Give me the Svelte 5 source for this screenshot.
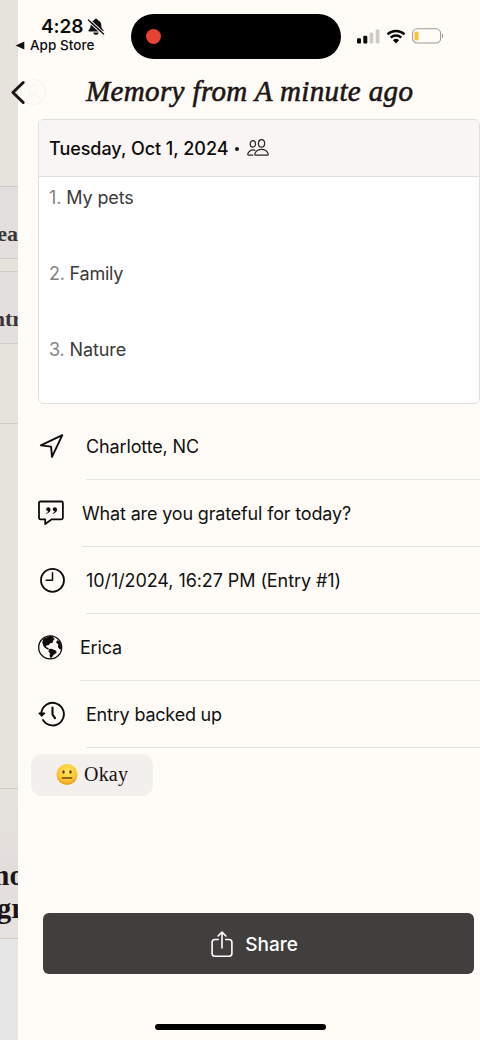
<script>
  const entries = ['My pets', 'Family', 'Nature'];
  const details = [
    { icon: 'location', label: 'Charlotte, NC', indent: 68, track: -0.13 },
    { icon: 'prompt', label: 'What are you grateful for today?', indent: 64, track: -0.16 },
    { icon: 'clock', label: '10/1/2024, 16:27 PM (Entry #1)', indent: 68, track: -0.08 },
    { icon: 'globe', label: 'Erica', indent: 62, track: -0.2 },
    { icon: 'history', label: 'Entry backed up', indent: 68, track: -0.2 }
  ];
</script>

<div class="screen">
  <aside class="peek">
    <div class="p-top"></div>
    <div class="p-box"><b>ea</b></div>
    <div class="p-gap"></div>
    <div class="p-box second"><b>ntr</b></div>
    <div class="p-mid"></div>
    <div class="p-low"></div>
    <div class="p-card"><b>mo</b><b>gr</b></div>
    <div class="p-end"></div>
  </aside>

  <main>
    <div class="status">
      <div class="left">
        <div class="time">
          <span>4:28</span>
          <svg width="18" height="18" viewBox="0 0 18 18">
            <path d="M9 .8c1 0 1.700.6 1.900 1.500 2.300.8 3.300 2.600 3.400 5 .1 2.700.9 3.700 2.100 4.800.5.6.2 1.400-.7 1.400H2.300c-.9 0-1.200-.8-.7-1.400 1.200-1.100 2-2.100 2.100-4.800.1-2.400 1.100-4.200 3.400-5C7.300 1.400 8 .8 9 .8Z" fill="#111" />
            <path d="M6.300 14.400h5.400c-.2 1.500-1.300 2.300-2.700 2.300s-2.500-.8-2.700-2.300Z" fill="#111" />
            <path d="M2.700 1.700 17 14.900M1 3.100 15.500 16.500" stroke="#fffcf8" stroke-width="1.100" />
            <path d="M1.400 2 16.600 16" stroke="#111" stroke-width="1.300" stroke-linecap="round" />
          </svg>
        </div>
        <div class="return">
          <svg width="10" height="9" viewBox="0 0 10 9"><path d="M.5 4.500 9.300.4v8.200Z" fill="#111" /></svg>
          <span>App Store</span>
        </div>
      </div>
      <div class="island"><i></i></div>
      <div class="signals">
        <svg width="23" height="15" viewBox="0 0 23 15">
          <rect x="0" y="9.300" width="4" height="5.200" rx="1.100" fill="#080808" />
          <rect x="6.300" y="6.700" width="4" height="7.800" rx="1.100" fill="#080808" />
          <rect x="12.500" y="3.600" width="3.800" height="10.900" rx="1.100" fill="#cdcbc8" />
          <rect x="18.700" y=".5" width="3.800" height="14" rx="1.100" fill="#cdcbc8" />
        </svg>
        <svg width="20" height="15" viewBox="0 0 20 15">
          <path d="M1.500 5.400a12.500 12.500 0 0 1 17 0M4.700 8.700a7.800 7.800 0 0 1 10.600 0" fill="none" stroke="#080808" stroke-width="2.500" />
          <path d="M6.900 11.200a4.600 4.600 0 0 1 6.200 0L10 14.400Z" fill="#080808" />
        </svg>
        <svg width="32" height="16" viewBox="0 0 32 16">
          <rect x=".6" y=".8" width="28" height="14.200" rx="4.600" fill="none" stroke="#9c9a97" stroke-width="1.100" />
          <rect x="2.500" y="3.500" width="4" height="9" rx="1.600" fill="#f6c62d" />
          <path d="M30 5.600c1.700.7 1.700 3.900 0 4.600Z" fill="#9c9a97" />
        </svg>
      </div>
    </div>

    <header>
      <svg class="back" width="16" height="26" viewBox="0 0 16 26">
        <path d="M13.200 2.500 2.900 12.500l10.300 10" fill="none" stroke="#1b1412" stroke-width="3" stroke-linecap="round" stroke-linejoin="round" />
      </svg>
      <svg class="ghost" width="28" height="28" viewBox="0 0 28 28" fill="none" stroke="#f8f5f0" stroke-width="1.400">
        <circle cx="14" cy="13" r="12.500" /><circle cx="14" cy="10" r="4" /><path d="M7 20c2-6 12-6 14 0" />
      </svg>
      <h1>Memory from A minute ago</h1>
    </header>

    <section class="card">
      <div class="date">
        <span>Tuesday, Oct 1, 2024</span><i></i>
        <svg width="22" height="18" viewBox="0 0 22 18" fill="none" stroke="#292524" stroke-width="1.200">
          <ellipse cx="5.900" cy="4.900" rx="2.700" ry="3.200" />
          <ellipse cx="14.500" cy="4.400" rx="3.100" ry="3.700" />
          <path d="M8.700 16.200c-1.300 0-1-1.400-.4-2.500 2.400-4.500 10-4.500 12.400 0 .6 1.100.9 2.500-.4 2.500Z" />
          <path d="M6.200 16.200H1.700c-1.200 0-1.100-1.300-.6-2.300 1.500-2.900 5-3.600 7.300-2.400" />
        </svg>
      </div>
      <ol>
        {#each entries as text, i}
          <li><em>{i + 1}.</em> {text}</li>
        {/each}
      </ol>
    </section>

    <section class="details">
      {#each details as row}
        <div class="row">
          <div class="icon" style:width="{row.indent}px">
            {#if row.icon === 'location'}
              <svg width="28" height="28" viewBox="0 0 28 28" fill="none" stroke="#0d0d0d" stroke-width="1.900" stroke-linejoin="round">
                <path d="M24.300 2.200 2.800 12.400l10.300 1.200.9 10.200Z" />
              </svg>
            {:else if row.icon === 'prompt'}
              <svg width="28" height="28" viewBox="0 0 28 28">
                <path d="M2.500 1.500h20.900c1 0 1.500.6 1.500 1.500v14.800c0 1-.6 1.500-1.500 1.500H13.800l-6.600 4.800v-4.800H2.500c-1 0-1.500-.6-1.500-1.500V3c0-.9.500-1.500 1.500-1.500Z" fill="none" stroke="#0d0d0d" stroke-width="1.800" stroke-linejoin="round" />
                <path d="M8.400 13.900c2.900-.7 4.100-2.400 4.100-4.300 0-1.400-.9-2.300-2.200-2.300-1.200 0-2.100.8-2.100 2 0 1.100.9 1.900 2 1.900-.1.900-.7 1.500-2 1.900ZM14.900 13.900c2.900-.7 4.100-2.400 4.100-4.300 0-1.400-.9-2.300-2.200-2.300-1.200 0-2.100.8-2.100 2 0 1.100.9 1.900 2 1.900-.1.900-.7 1.500-2 1.900Z" fill="#0d0d0d" />
              </svg>
            {:else if row.icon === 'clock'}
              <svg width="28" height="28" viewBox="0 0 28 28" fill="none" stroke="#0d0d0d" stroke-width="1.800" stroke-linecap="round" stroke-linejoin="round">
                <circle cx="14.500" cy="13.300" r="11.500" /><path d="M14.500 5.800v7.500H8.200" stroke-width="1.500" />
              </svg>
            {:else if row.icon === 'globe'}
              <svg width="28" height="28" viewBox="0 0 28 28">
                <g transform="translate(.2 -.6)">
                  <circle cx="12" cy="14" r="11.500" fill="none" stroke="#0d0d0d" stroke-width="1.300" />
                  <path d="M8 4 12.500 2.300l3.200.8-.8 1.300 1.700 1.200-1.700 1.700-.5 2-2.400.5-1.300 1.900-2.400.3-.7 1.500 2 .8 1.500 1.500-1.700.2-2.900-1.700-1.400-2-1-3.200.8-3.200L7 4Z" fill="#0d0d0d" />
                  <path d="m10.800 15.700 2.700-.4 4.400 2 .5 2-3 2.200-1.800 2.600-1.600.3-.6-2.400.4-2.200-1.500-1.800ZM18.800 6.900l2.500 1 1.700 4.300-.1 4-1.700-.6-1.500-2.100.4-2.300-2.200-2Z" fill="#0d0d0d" />
                </g>
              </svg>
            {:else}
              <svg width="28" height="28" viewBox="0 0 28 28" fill="none" stroke="#0d0d0d" stroke-width="1.900" stroke-linecap="round" stroke-linejoin="round">
                <path d="M3.300 12.800A11.300 11.300 0 1 1 5 19.100" /><path d="M14.500 6.600v6.900l2.500 3.700" stroke-width="2.100" />
                <path d="m1 12.100 2.700 3 3-3Z" fill="#0d0d0d" stroke-width="1.300" />
              </svg>
            {/if}
          </div>
          <div class="label" style:letter-spacing="{row.track}px">{row.label}</div>
        </div>
      {/each}
    </section>

    <div class="mood">
      <svg width="22" height="22" viewBox="0 0 22 22">
        <defs><radialGradient id="face" cx=".5" cy=".35" r=".65"><stop offset="0" stop-color="#ffe45b" /><stop offset=".65" stop-color="#fdc732" /><stop offset="1" stop-color="#ed981c" /></radialGradient></defs>
        <circle cx="11" cy="10.500" r="10.500" fill="url(#face)" />
        <ellipse cx="7.500" cy="8" rx="1.200" ry="1.800" fill="#5a3814" /><ellipse cx="14.500" cy="8" rx="1.200" ry="1.800" fill="#5a3814" />
        <path d="M6.300 14h9.400" stroke="#6a4315" stroke-width="1.300" stroke-linecap="round" />
      </svg>
      <span>Okay</span>
    </div>

    <button>
      <svg width="22" height="28" viewBox="0 0 22 28" fill="none" stroke="#fff" stroke-width="1.600" stroke-linecap="round" stroke-linejoin="round">
        <path d="M7.300 9.500H4C2.200 9.500 1.100 10.500 1.100 12.300V23.500c0 1.800 1.100 2.800 2.900 2.800h14c1.800 0 2.900-1 2.900-2.800V12.300C20.900 10.500 19.800 9.500 18 9.500h-3.300" />
        <path d="M11 18V2.300M7.100 6 11 2.100 14.900 6" />
      </svg>
      <span>Share</span>
    </button>
    <div class="home"></div>
  </main>
</div>

<style>
  :global(body) { margin: 0; background: #fffcf8; }
  .screen { display: flex; width: 480px; height: 1040px; overflow: hidden; background: #fffcf8; font-family: Inter, sans-serif; }
  .screen * { box-sizing: border-box; }
  .peek { width: 18px; flex: none; background: #e6e3dd; overflow: hidden; font-family: "Liberation Serif", serif; color: #3a3534; }
  .p-top { height: 186px; }
  .p-box { height: 73px; background: #e3dfde; border: solid #cfcbc8; border-width: 1px 0; display: flex; justify-content: flex-end; padding-top: 34px; font-size: 22px; line-height: 25px; }
  .p-box.second b { margin-right: -4px; }
  .p-gap { height: 12px; }
  .p-mid { height: 80px; border-bottom: 1px solid #cfcbc7; }
  .p-low { height: 365px; border-bottom: 1px solid #cfcbc7; }
  .p-card { height: 150px; background: linear-gradient(#e5e2dc, #e3dedc 55%, #e5e2df); border-bottom: 1px solid #cfcbc8; display: flex; flex-direction: column; align-items: flex-end; padding-top: 70px; font-size: 29px; line-height: 33px; color: #1b1513; }
  .p-card b { margin-right: -6px; }
  .p-end { height: 101px; background: #e6e6e7; }

  main { width: 462px; flex: none; position: relative; display: flex; flex-direction: column; }
  .status { height: 66px; margin-left: -18px; display: flex; align-items: flex-start; color: #0d0d0d; }
  .left { width: 131px; padding: 15px 0 0 15px; }
  .time { display: flex; align-items: center; gap: 4px; height: 23px; padding-left: 26px; font-size: 19px; font-weight: 600; letter-spacing: -.1px; }
  .return { display: flex; align-items: center; gap: 5px; height: 14px; font-size: 13.500px; font-weight: 500; white-space: nowrap; letter-spacing: .05px; }
  .island { width: 210px; height: 45px; margin-top: 14px; border-radius: 23px; background: #000; padding: 14.500px; }
  .island i { display: block; width: 15px; height: 15px; border-radius: 50%; background: #e64234; }
  .signals { display: flex; align-items: center; gap: 6px; padding: 28px 0 0 16px; }
  header { height: 53px; margin-left: -18px; display: flex; align-items: center; }
  .back { margin-left: 10px; position: relative; z-index: 1; }
  .ghost { margin-left: -7px; }
  h1 { margin: 0 0 4px 39px; font: italic 400 29px/40px "Liberation Serif", serif; letter-spacing: .37px; color: #1d1614; -webkit-text-stroke: .6px #1d1614; white-space: nowrap; }
  .card { width: 442px; height: 285px; margin: 0 0 0 20px; border: 1.500px solid #e1dfdd; border-radius: 6px; background: #fff; overflow: hidden; flex: none; }
  .date { height: 57px; background: #f9f5f4; border-bottom: 1.500px solid #e1dfdd; padding-left: 10px; display: flex; align-items: center; font-size: 18px; font-weight: 500; letter-spacing: -.04px; color: #0e0b0b; white-space: nowrap; }
  .date i { width: 4px; height: 4px; border-radius: 50%; background: #171313; margin: 2px 8px 0 7px; }
  ol { list-style: none; padding: 8px 0 0 10px; margin: 0; }
  li { height: 75.600px; line-height: 26px; font-size: 18px; letter-spacing: -.22px; color: #3b3a3a; }
  li:first-child { letter-spacing: -.12px; }
  li:last-child { line-height: 27px; letter-spacing: -.12px; }
  em { font-style: normal; color: #858383; }
  .details { display: flex; flex-direction: column; margin-top: 9px; }
  .row { height: 67.100px; display: flex; }
  .icon { flex: none; padding: 20px 0 0 20px; }
  .label { flex: 1; border-bottom: 1px solid #e5e2df; display: flex; align-items: center; padding-top: 1px; font-size: 18px; color: #111; white-space: nowrap; }
  .mood { width: 122px; height: 42px; margin: 5.500px 0 0 13px; border-radius: 11px; background: #f3efec; display: flex; align-items: center; padding-left: 25px; gap: 6px; font: 20px "Liberation Serif", serif; color: #171313; flex: none; }
  .mood span { letter-spacing: .2px; }
  button { width: 431px; height: 61px; margin: 117px 0 0 25px; padding: 2px 8px 0 0; flex: none; border: 0; border-radius: 6px; background: #413e3e; color: #fff; display: flex; align-items: center; justify-content: center; gap: 12px; font: 500 19px Inter, sans-serif; }
  .home { width: 171px; height: 6px; border-radius: 3px; background: #000; margin: 50px 0 0 137px; }
</style>
